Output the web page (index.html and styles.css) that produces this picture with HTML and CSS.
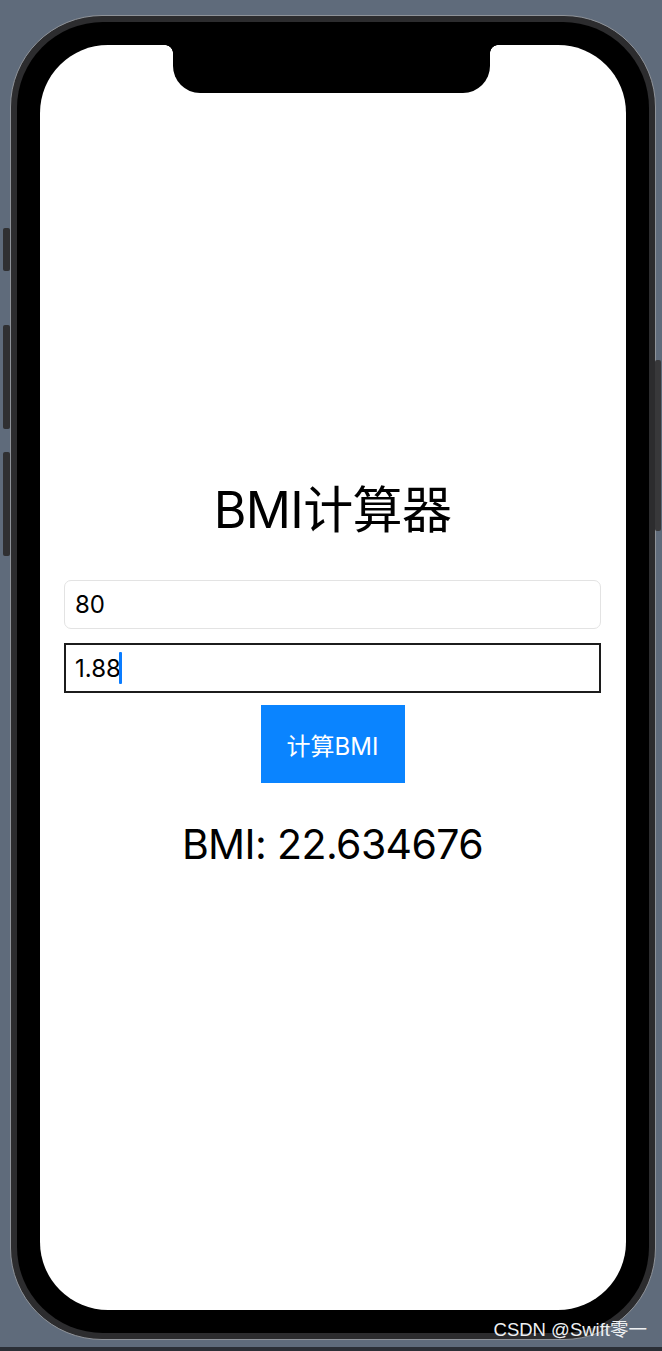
FILE: index.html
```html
<!DOCTYPE html>
<html lang="zh">
<head>
<meta charset="utf-8">
<title>BMI计算器</title>
<link rel="stylesheet" href="styles.css">
</head>
<body>
  <div class="phone">
    <span class="side-btn btn-a"></span>
    <span class="side-btn btn-b"></span>
    <span class="side-btn btn-c"></span>
    <span class="side-btn btn-r"></span>
    <div class="bezel">
      <div class="screen">
        <div class="notch"></div>
        <div class="content">
          <h1 class="title">BMI计算器</h1>
          <div class="field field-rounded">80</div>
          <div class="field field-focused">1.88<span class="caret"></span></div>
          <div class="btn">计算BMI</div>
          <div class="result">BMI: 22.634676</div>
        </div>
      </div>
    </div>
  </div>
  <div class="strip"></div>
  <div class="watermark">CSDN @Swift零一</div>
</body>
</html>
```

FILE: styles.css
```css
html, body {
  margin: 0;
  padding: 0;
}
body {
  width: 662px;
  height: 1351px;
  overflow: hidden;
  background: #5f6b7b;
  position: relative;
  font-family: Inter, "Noto Sans", "Noto Sans CJK SC", sans-serif;
  padding-top: 15px;
  box-sizing: border-box;
}
.phone {
  position: relative;
  margin-left: 10px;
  width: 646px;
  height: 1325px;
  box-sizing: border-box;
  border: 1px solid #8f9399;
  border-radius: 92px;
  background: #2c2c2e;
  padding: 6px;
}
.side-btn {
  position: absolute;
  background: #303032;
  border-radius: 2px;
}
.btn-a { left: -8px; top: 212px; width: 7px; height: 43px; }
.btn-b { left: -8px; top: 309px; width: 7px; height: 104px; }
.btn-c { left: -8px; top: 436px; width: 7px; height: 104px; }
.btn-r { left: 644px; top: 344px; width: 6px; height: 171px; background: #38383a; }
.bezel {
  height: 100%;
  box-sizing: border-box;
  background: #000;
  border-radius: 86px;
  padding: 23px;
}
.screen {
  position: relative;
  height: 100%;
  background: #fff;
  border-radius: 68px;
  overflow: hidden;
}
.notch {
  position: absolute;
  left: 133px;
  top: 0;
  width: 317px;
  height: 48px;
  background: #000;
  border-radius: 0 0 27px 27px;
}
.notch::before,
.notch::after {
  content: "";
  position: absolute;
  top: 0;
  width: 8px;
  height: 8px;
}
.notch::before {
  left: -8px;
  background: radial-gradient(circle at 0 8px, transparent 7.5px, #000 8px);
}
.notch::after {
  right: -8px;
  background: radial-gradient(circle at 8px 8px, transparent 7.5px, #000 8px);
}
.content {
  height: 100%;
  box-sizing: border-box;
  display: flex;
  flex-direction: column;
  align-items: center;
  padding: 436px 25px 0 24px;
}
.title {
  margin: 0;
  font-weight: 400;
  font-size: 50px;
  line-height: 59px;
  color: #000;
  letter-spacing: -0.6px;
}
.field {
  align-self: stretch;
  box-sizing: border-box;
  height: 49px;
  display: flex;
  align-items: center;
  padding-left: 10px;
  font-size: 24px;
  color: #000;
}
.field-rounded {
  margin-top: 40px;
  border: 1px solid #e3e3e3;
  border-radius: 7px;
}
.field-focused {
  margin-top: 14px;
  height: 50px;
  border: 2px solid #1c1c1c;
  padding-left: 9px;
}
.caret {
  display: inline-block;
  width: 3px;
  height: 32px;
  margin-left: -2px;
  background: #0a7cff;
  border-radius: 1px;
}
.btn {
  margin-top: 12px;
  width: 144px;
  height: 78px;
  background: #0a84ff;
  color: #fff;
  font-size: 24px;
  display: flex;
  align-items: center;
  justify-content: center;
}
.result {
  margin-top: 35px;
  font-size: 41px;
  line-height: 52px;
  color: #000;
  letter-spacing: -0.6px;
}
.strip {
  margin-top: 7px;
  height: 4px;
  background: #2b2f36;
}
.watermark {
  position: absolute;
  right: 15px;
  top: 1319px;
  font-family: "Liberation Sans", "Noto Sans CJK SC", sans-serif;
  font-size: 18.5px;
  line-height: 22px;
  color: #eef0f2;
}
```
